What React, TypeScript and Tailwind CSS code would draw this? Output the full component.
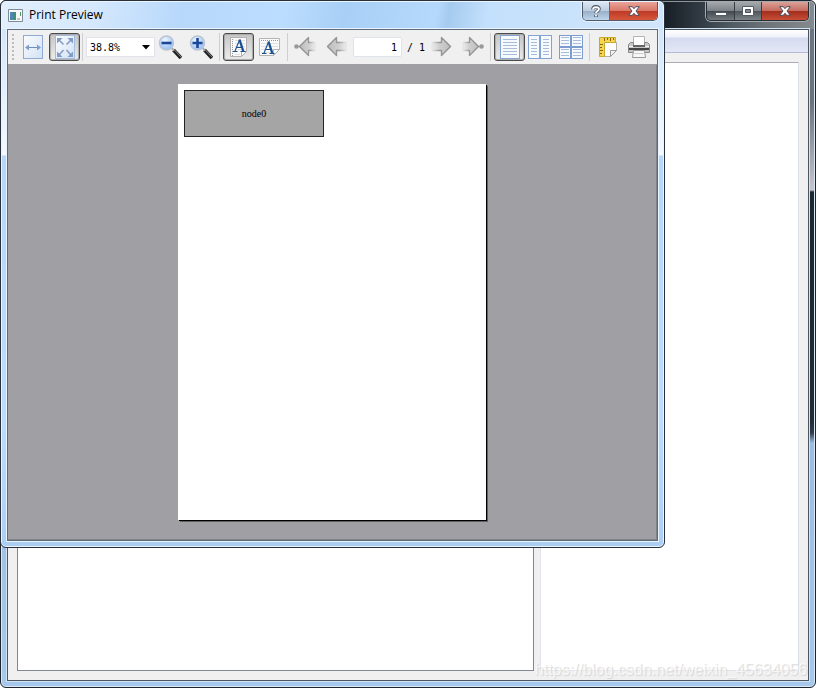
import { useState } from "react"
import type { ReactNode } from "react"

type ToolButtonProps = {
  label: string
  pressed?: boolean
  children: ReactNode
}

function ToolButton({ label, pressed = false, children }: ToolButtonProps) {
  return (
    <button
      type="button"
      aria-label={label}
      aria-pressed={pressed}
      className={
        pressed
          ? "flex h-7 w-[31px] shrink-0 items-center justify-center rounded-[3px] border border-[#4b4b4b] bg-gradient-to-b from-[#c6c6c6] to-[#ededed] shadow-[inset_0_0_1px_1px_#a9a9a9]"
          : "flex h-7 w-[31px] shrink-0 items-center justify-center pr-[2px]"
      }
    >
      <svg width="24" height="24" viewBox="0 0 24 24" fill="none" aria-hidden="true">
        {children}
      </svg>
    </button>
  )
}

function Separator() {
  return (
    <div className="flex h-7 w-[6px] shrink-0 pl-[2px]">
      <div className="w-px bg-[#cfcfcf]" />
    </div>
  )
}

function SheetLines({ x, y, width, rows, step = 3 }: { x: number; y: number; width: number; rows: number; step?: number }) {
  return (
    <>
      {Array.from({ length: rows }, (_, i) => (
        <path key={i} d={`M${x} ${y + i * step + 0.5}h${width}`} stroke="#a9bddb" />
      ))}
    </>
  )
}

function FitWidthIcon() {
  return (
    <>
      <rect x="2.5" y=".5" width="19" height="23" fill="url(#sheet)" stroke="#8fabd3" />
      <path d="M5 12.500h14" stroke="#6d8fbe" />
      <path d="M4 12.500l4-3v6zM20 12.500l-4-3v6z" fill="#7f9ec9" />
    </>
  )
}

function FitPageIcon() {
  return (
    <>
      <rect x="2.500" y=".500" width="19" height="23" fill="url(#sheet)" stroke="#a3bbde" />
      <path d="M6 5l4.500 4.500M18 5l-4.500 4.500M6 20l4.500-5M18 20l-4.500-5" stroke="#7f9bc4" strokeWidth="1.500" />
      <path d="M4 3h5.500L4 8.500zM20 3h-5.500l5.500 5.500zM4 22h5.500L4 16.500zM20 22h-5.500l5.500-5.500z" fill="#7f9bc4" />
    </>
  )
}

function ZoomIcon({ plus = false }: { plus?: boolean }) {
  return (
    <>
      <path d="M15.500 15l7.500 8" stroke="#222" strokeWidth="3.600" />
      <path d="M16 14.500l7 7.500" stroke="#888" strokeWidth="1" />
      <path d="M13 12.500l3 3" stroke="#aaa" strokeWidth="2" />
      <circle cx="8.500" cy="8" r="7" fill="url(#lens)" stroke="#b9c4d4" strokeWidth="1.500" />
      <path d={plus ? "M3.500 8h10M8.500 3v10" : "M3.500 8h10"} stroke="#1b4796" strokeWidth="2.600" />
    </>
  )
}

function LetterA() {
  return (
    <g stroke="#194f90">
      <path d="M7 17l4.500-11" strokeWidth="1.100" />
      <path d="M11.500 5.500l3.700 11.500" strokeWidth="2.300" />
      <path d="M8.500 13.500h5M5 17.500h4.500M12.500 17.500h5" strokeWidth="1.100" />
    </g>
  )
}

function PortraitIcon() {
  return (
    <>
      <path d="M3.500 2.500h16v14l-5 5h-11z" fill="#fafafa" stroke="#b0b0b0" />
      <path d="M5.500 4v17" stroke="#999" strokeDasharray="1 1" />
      <path d="M8 5.500h10M8 8.500h10M8 11.500h10M8 14.500h10M8 19.500h5" stroke="#e1e1e1" />
      <path d="M19.500 16.500h-5v5z" fill="#fff" stroke="#b0b0b0" />
      <g transform="translate(1 -1)"><LetterA /></g>
    </>
  )
}

function LandscapeIcon() {
  return (
    <>
      <path d="M2.500 3.500h20v11l-6 6h-14z" fill="#fafafa" stroke="#b4b4b4" />
      <path d="M4 5.500h17" stroke="#999" strokeDasharray="1 1" />
      <path d="M4 8.500h17M4 11.500h17M4 14.500h14M4 17.500h12" stroke="#e1e1e1" />
      <path d="M22.500 14.500h-6v6z" fill="#fff" stroke="#b0b0b0" />
      <g transform="translate(0 1)"><LetterA /></g>
    </>
  )
}

function ArrowIcon({ right = false, end = false }: { right?: boolean; end?: boolean }) {
  return (
    <g transform={right ? "translate(24 0) scale(-1 1)" : undefined}>
      {end && <path d="M3 11.500h4" stroke="#aaa" />}
      {end && <circle cx="2.500" cy="11.500" r="2.300" fill="#999" />}
      <path
        d={end ? "M5.500 11.500l9-9v5h6.500v8h-6.500v5z" : "M2.500 11.500l9-9v5h9.500v8h-9.500v5z"}
        fill="url(#arrow)"
        stroke="url(#arrowLine)"
        strokeWidth="1.400"
        strokeLinejoin="round"
      />
    </g>
  )
}

function SinglePageIcon() {
  return (
    <>
      <rect x="2.500" y=".500" width="19" height="23" fill="#f6f9fe" stroke="#83a3d1" />
      <SheetLines x={5} y={4} width={14} rows={6} />
    </>
  )
}

function FacingPagesIcon() {
  return (
    <>
      <rect x=".500" y=".500" width="11" height="23" fill="#f6f9fe" stroke="#83a3d1" />
      <rect x="12.500" y=".500" width="11" height="23" fill="#f6f9fe" stroke="#83a3d1" />
      <SheetLines x={3} y={4} width={6} rows={6} />
      <SheetLines x={15} y={4} width={6} rows={6} />
    </>
  )
}

function OverviewIcon() {
  return (
    <>
      {[0, 12].map((x) =>
        [0, 12].map((y) => (
          <g key={`${x}-${y}`}>
            <rect x={x + 0.5} y={y + 0.5} width="11" height="11" fill="#f6f9fe" stroke="#7c9ecf" />
            <SheetLines x={x + 2} y={y + 2} width={8} rows={3} />
          </g>
        )),
      )}
    </>
  )
}

function PageSetupIcon() {
  return (
    <>
      <path d="M8.500 7.500h12v8l-6 6h-6z" fill="#fff" stroke="#b0b0b0" />
      <path d="M20.500 15.500h-6v6z" fill="#f2f2f2" stroke="#999" />
      <path d="M3.500 2.500h16v5h-11v14h-5z" fill="#f5d64e" stroke="#c9a92e" />
      <path d="M8.500 3v3M11.500 3v2M14.500 3v3M17.500 3v2M4 9.500h3M4 12.500h2M4 15.500h3M4 18.500h2" stroke="#826a12" />
    </>
  )
}

function PrinterIcon() {
  return (
    <>
      <path d="M6.500 1.500h11v10h-11z" fill="#fff" stroke="#b4b4b4" />
      <path d="M1.500 9.500l2-2h3v4h11v-4h3l2 2v8h-21z" fill="#c6c6c6" stroke="#888" />
      <path d="M2 11.500h20" stroke="#f4f4f4" />
      <path d="M6 10h12v2H6z" fill="#666" />
      <path d="M2 13h20v2H2z" fill="#444" />
      <path d="M6.500 15.500h11l1 7h-13z" fill="#f7f7f7" stroke="#999" />
      <path d="M7.500 18.500h9" stroke="#ccc" />
    </>
  )
}

function IconGradients() {
  return (
    <svg width="0" height="0" className="absolute" aria-hidden="true">
      <defs>
        <linearGradient id="sheet" x1="0" y1="0" x2="1" y2="1">
          <stop offset="0" stopColor="#fbfdff" />
          <stop offset="1" stopColor="#d2e1f4" />
        </linearGradient>
        <radialGradient id="lens" cx=".4" cy=".3" r=".7">
          <stop offset="0" stopColor="#f2f8ff" />
          <stop offset="1" stopColor="#94bef5" />
        </radialGradient>
        <linearGradient id="arrow">
          <stop offset="0" stopColor="#bdbdbd" />
          <stop offset=".6" stopColor="#cfcfcf" />
          <stop offset="1" stopColor="#ececec" />
        </linearGradient>
        <linearGradient id="arrowLine">
          <stop offset="0" stopColor="#8d8d8d" />
          <stop offset=".6" stopColor="#999" />
          <stop offset="1" stopColor="#e6e6e6" />
        </linearGradient>
      </defs>
    </svg>
  )
}

function CloseGlyph() {
  return (
    <svg width="12" height="10" viewBox="0 0 12 10" aria-hidden="true">
      <path d="M.700 .700h3.600L6 2.700 7.700 .700h3.600L8 5l3.300 4.300H7.700L6 7.300 4.300 9.300H.700L4 5z" fill="#fff" stroke="#4e4a58" />
    </svg>
  )
}

function PreviewDialog() {
  const [page, setPage] = useState("1")

  return (
    <section
      aria-label="Print Preview"
      className="absolute top-0 right-[151px] left-0 rounded-[6px] border border-[#29303c] bg-[linear-gradient(to_bottom,#c8e1fb_0,#dcebfb_60px,#f3f9ff_154px,#b5d8fa_155px,#bbdcff_420px,#abcff3_100%)] px-[6px] pb-[6px] shadow-[inset_0_0_0_1px_#e9f5ff]"
    >
      <header className="-mx-[5px] flex h-7 items-start rounded-t-[5px] border-t border-[#e9f5ff] bg-[linear-gradient(100deg,#e2effc_0,#d5e8fd_90px,#b7d8fb_180px,#bbddff_280px,#a8cff5_340px,#b5d9fc_430px,#a5cbef_442px,#c3e0fc_480px,#d1e5fa_100%)]">
        <div className="flex h-[26px] flex-1 items-center gap-[6px] pl-[6px]">
          <svg width="15" height="13" viewBox="0 0 15 13" aria-hidden="true">
            <path d="M.500 .500h14v12H.500z" fill="#f8f8f8" stroke="#7d8b99" />
            <path d="M2 3h6v8H2z" fill="#3f8e82" />
            <path d="M2 3h3v8H2z" fill="#5286ac" />
            <path d="M9 9h3v2H9z" fill="#b8c5bd" />
            <path d="M12 3h1v4h-1z" fill="#4c9a62" />
          </svg>
          <h1 className="font-['Open_Sans',sans-serif] text-[12px] leading-4 text-black">Print Preview</h1>
        </div>
        <div className="mr-[5px] flex h-[19px] overflow-hidden rounded-b-[5px] border border-t-0 border-[#4f5b6c] shadow-[0_0_0_1px_#e6f3ff]">
          <button
            type="button"
            aria-label="Help"
            className="flex w-[27px] items-center justify-center border-r border-[#5d6979] bg-[linear-gradient(to_bottom,#dce8f4_0,#bdcddf_48%,#98aec6_50%,#bdd6ec_100%)]"
          >
            <svg width="10" height="13" viewBox="0 0 10 13" fill="none" aria-hidden="true">
              <path d="M2 4.500C2 1 8 1 8 4c0 2-3 2-3 4M5 10v2" stroke="#4d5666" strokeWidth="3.600" />
              <path d="M2 4.500C2 1.500 8 1.500 8 4c0 2-3 2-3 4M5 10v1.600" stroke="#fff" strokeWidth="1.800" />
            </svg>
          </button>
          <button
            type="button"
            aria-label="Close"
            className="flex w-[47px] items-center justify-center bg-[linear-gradient(to_bottom,#eaa49a_0,#d97768_48%,#bd3925_50%,#d7583b_100%)]"
          >
            <CloseGlyph />
          </button>
        </div>
      </header>

      <div className="border border-[#5b6b7c] shadow-[0_0_0_1px_#eaf5ff]">
        <div role="toolbar" className="flex h-[35px] items-center overflow-hidden border-b border-[#9e9fa2] bg-[#f0f0f0] font-['DejaVu_Sans_Mono',monospace] text-[10px] text-black">
          <div className="flex w-[10px] shrink-0 flex-col gap-[2px] pl-1">
            {Array.from({ length: 7 }, (_, i) => (
              <span key={i} className="size-[2px] bg-[#bcbcbc]" />
            ))}
          </div>
          <ToolButton label="Fit width">
            <FitWidthIcon />
          </ToolButton>
          <ToolButton label="Fit page" pressed>
            <FitPageIcon />
          </ToolButton>
          <Separator />
          <div className="relative flex shrink-0">
            <select
              aria-label="Zoom factor"
              defaultValue="38.8%"
              className="h-5 w-[69px] appearance-none border border-[#e0e3ea] bg-white pl-[3px] text-[10px]"
            >
              <option>38.8%</option>
              <option>50%</option>
              <option>100%</option>
            </select>
            <svg width="8" height="5" viewBox="0 0 8 5" className="pointer-events-none absolute top-2 right-[5px]" aria-hidden="true">
              <path d="M0 0h8L4 4.500z" fill="#000" />
            </svg>
          </div>
          <ToolButton label="Zoom out">
            <ZoomIcon />
          </ToolButton>
          <ToolButton label="Zoom in">
            <ZoomIcon plus />
          </ToolButton>
          <Separator />
          <ToolButton label="Portrait" pressed>
            <PortraitIcon />
          </ToolButton>
          <ToolButton label="Landscape">
            <LandscapeIcon />
          </ToolButton>
          <Separator />
          <ToolButton label="First page">
            <ArrowIcon end />
          </ToolButton>
          <ToolButton label="Previous page">
            <ArrowIcon />
          </ToolButton>
          <input
            aria-label="Page"
            value={page}
            onChange={(e) => setPage(e.target.value)}
            className="h-5 w-[49px] shrink-0 rounded-[2px] border border-[#dfe3ec] bg-white pr-1 text-right text-[10px]"
          />
          <span className="w-6 shrink-0 pl-[5px] whitespace-pre">/ 1</span>
          <ToolButton label="Next page">
            <ArrowIcon right />
          </ToolButton>
          <ToolButton label="Last page">
            <ArrowIcon right end />
          </ToolButton>
          <Separator />
          <ToolButton label="Show single page" pressed>
            <SinglePageIcon />
          </ToolButton>
          <ToolButton label="Show facing pages">
            <FacingPagesIcon />
          </ToolButton>
          <ToolButton label="Show overview of all pages">
            <OverviewIcon />
          </ToolButton>
          <Separator />
          <ToolButton label="Page setup">
            <PageSetupIcon />
          </ToolButton>
          <ToolButton label="Print">
            <PrinterIcon />
          </ToolButton>
        </div>

        <div className="flex justify-center border-r border-b border-[#7f8389] bg-[#a09fa4] pt-[19px] pb-[19px]">
          <div className="h-[436px] w-[308px] bg-white p-[6px] shadow-[1px_1px_0_#000,2px_2px_0_#606063]">
            <div className="flex h-[47px] w-[140px] items-center justify-center border border-[#222] bg-[#a5a5a5] font-['Liberation_Serif',serif] text-[10px] text-black">
              node0
            </div>
          </div>
        </div>
      </div>
    </section>
  )
}

export default function App() {
  return (
    <div className="relative flex min-h-screen flex-col bg-white">
      <IconGradients />
      <main className="flex flex-1 flex-col rounded-[6px] border border-[#1d242b] bg-[linear-gradient(to_bottom,#70777d_0,#6d7277_100px,#c9c5ca_189px,#1c282d_191px,#222c32_420px,#323b48_432px,#9dbddf_442px,#a5c8ec_100%)] px-[6px] pb-[6px] shadow-[inset_0_0_0_1px_#dbe9f6]">
        <header className="-mx-[5px] flex h-7 items-start justify-end rounded-t-[5px] border-t border-[#8d949a] bg-[linear-gradient(to_left,#858a8e_0,#6c7379_50px,#525d66_80px,#343e46_110px,#171e25_150px)]">
          <div className="mr-[5px] flex h-[19px] overflow-hidden rounded-b-[5px] border border-t-0 border-[#272d33] shadow-[0_0_0_1px_#a6abb0]">
            <button
              type="button"
              aria-label="Minimize"
              className="flex w-7 items-center justify-center border-r border-[#383d42] bg-[linear-gradient(to_bottom,#a5a9ad_0,#7c8287_48%,#40474e_50%,#737a80_100%)]"
            >
              <span className="mt-[5px] h-1 w-3 border border-[#555b65] bg-white" />
            </button>
            <button
              type="button"
              aria-label="Maximize"
              className="flex w-[27px] items-center justify-center border-r border-[#383d42] bg-[linear-gradient(to_bottom,#a5a9ad_0,#80868b_48%,#4c5359_50%,#7d8489_100%)]"
            >
              <svg width="12" height="10" viewBox="0 0 12 10" aria-hidden="true">
                <path d="M.500 .500h11v9H.500z" fill="#fff" stroke="#555b65" />
                <path d="M3.500 3.500h5v3h-5z" fill="#858b94" stroke="#4a505a" />
              </svg>
            </button>
            <button
              type="button"
              aria-label="Close window"
              className="flex w-[46px] items-center justify-center bg-[linear-gradient(to_bottom,#dba198_0,#c56d60_48%,#a22d1c_50%,#c84e37_100%)]"
            >
              <CloseGlyph />
            </button>
          </div>
        </header>

        <div className="flex flex-1 flex-col border border-[#475565] bg-[#f0f0f0] shadow-[0_0_0_1px_#d5e3f0]">
          <div className="h-[23px] border-b border-[#b4bbd5] bg-[linear-gradient(to_bottom,#fff_0,#eff2f9_7px,#d5daee_8px,#e3e7f6_100%)]" />
          <div className="flex flex-1 gap-[6px] px-[9px] pt-[9px] pb-[9px]">
            <div className="flex-[2] border border-[#828790] bg-white" />
            <div className="flex-1 border border-t-[#abadb3] border-r-[#dbdfe6] border-b-[#e3e3ec] border-l-[#e2e3ea] bg-white" />
          </div>
        </div>
      </main>

      <PreviewDialog />

      <p className="absolute right-[9px] bottom-[8px] font-['Liberation_Sans',sans-serif] text-[16px] leading-5 text-white/70 [text-shadow:1px_1px_1px_#d4d4d4]">
        https://blog.csdn.net/weixin_45634056
      </p>
    </div>
  )
}
